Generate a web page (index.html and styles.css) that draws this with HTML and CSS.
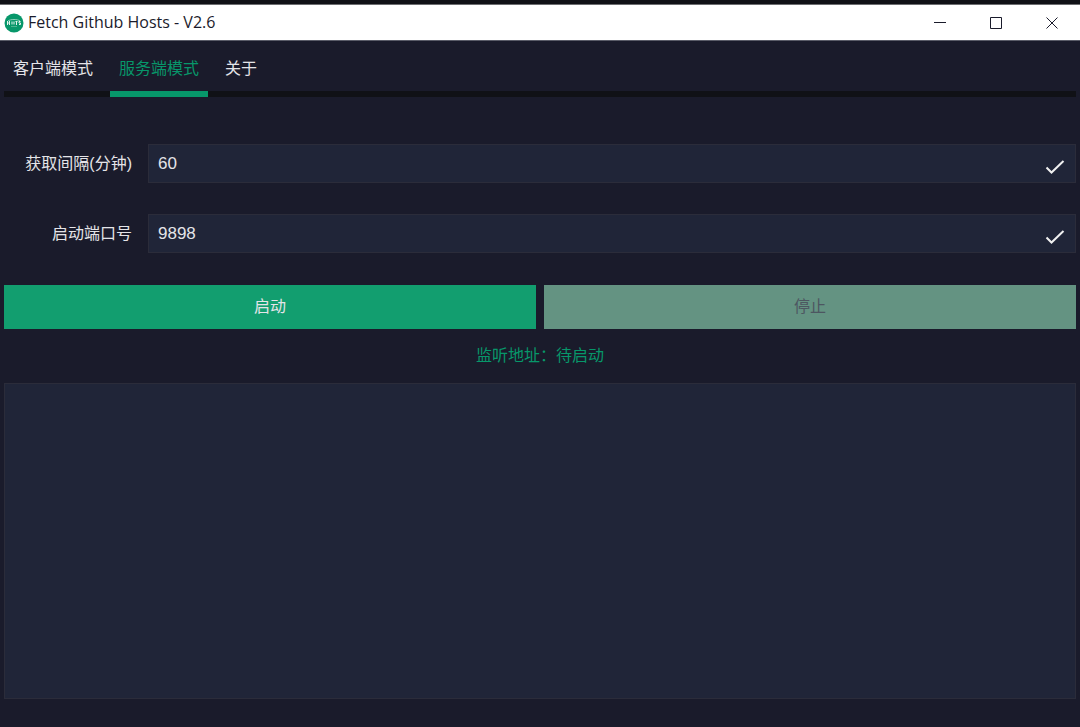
FILE: index.html
```html
<!DOCTYPE html>
<html lang="zh-CN">
<head>
    <meta charset="UTF-8">
    <meta name="viewport" content="width=device-width, initial-scale=1.0">
    <title>Fetch Github Hosts - V2.6</title>
    <link rel="stylesheet" href="styles.css">
</head>
<body>
    <header class="title-bar">
        <svg class="app-logo" viewBox="0 0 20 20" aria-hidden="true">
            <circle cx="10" cy="10" r="9.5" fill="#07976a"/>
            <path d="M4 8c2-2 10-2 12 0" fill="none" stroke="#8fd0b8" stroke-width="1"/>
            <path d="M3.5 8v4M5.5 8v4M3.5 10h2M8 8.5v3M10 8.5v3M12.5 8v4M11.5 8.5h2M16.5 8.5h-1.5v1.500h1.500v1.500h-1.500" fill="none" stroke="#e6f5ef" stroke-width="1"/>
            <path d="M7 13.500h6" stroke="#4db38f" stroke-width="1"/>
        </svg>
        <h1 class="app-title">Fetch Github Hosts - V2.6</h1>
        <div class="window-controls">
            <button type="button" class="window-btn" aria-label="最小化">
                <svg viewBox="0 0 12 12"><path d="M0 5.500h12"/></svg>
            </button>
            <button type="button" class="window-btn" aria-label="最大化">
                <svg viewBox="0 0 12 12"><path d="M.5.5h11v11H.5z"/></svg>
            </button>
            <button type="button" class="window-btn" aria-label="关闭">
                <svg viewBox="0 0 12 12"><path d="M.5.5l11 11M11.500.5l-11 11"/></svg>
            </button>
        </div>
    </header>

    <main class="content">
        <nav class="tabs">
            <button type="button" class="tab">客户端模式</button>
            <button type="button" class="tab active">服务端模式</button>
            <button type="button" class="tab">关于</button>
        </nav>

        <form class="server-form">
            <label class="field-label" for="interval">获取间隔(分钟)</label>
            <div class="field">
                <input type="text" id="interval" class="field-input" value="60">
                <svg class="field-check" viewBox="0 0 20 16" aria-hidden="true"><path d="M1.500 8.500l5 5L18.500 2"/></svg>
            </div>
            <label class="field-label" for="port">启动端口号</label>
            <div class="field">
                <input type="text" id="port" class="field-input" value="9898">
                <svg class="field-check" viewBox="0 0 20 16" aria-hidden="true"><path d="M1.500 8.500l5 5L18.500 2"/></svg>
            </div>
        </form>

        <div class="actions">
            <button type="button" class="action-btn">启动</button>
            <button type="button" class="action-btn" disabled>停止</button>
        </div>

        <p class="status">监听地址：待启动</p>

        <textarea class="log" aria-label="日志" readonly></textarea>
    </main>
</body>
</html>
```
FILE: styles.css
```css
* {
    margin: 0;
    padding: 0;
    box-sizing: border-box;
}

body {
    font-family: "Liberation Sans", "Noto Sans CJK SC", sans-serif;
    font-size: 16px;
    line-height: 24px;
    color: #e4e4e8;
    background: #1a1b2b;
    min-height: 100vh;
    display: flex;
    flex-direction: column;
    border-top: 4px solid #101116;
}

button,
input,
textarea {
    font: inherit;
    color: inherit;
    border: none;
    outline: none;
}

/* title bar */
.title-bar {
    display: flex;
    align-items: center;
    height: 37px;
    padding-left: 4px;
    background: white;
    color: #1a1b2b;
    border-top: 1px solid #6c6d70;
    border-bottom: 1px solid #5a5c68;
}

.app-logo {
    width: 20px;
    height: 20px;
}

.app-title {
    flex: 1;
    margin-left: 4px;
    font-family: "Open Sans", "Noto Sans", sans-serif;
    font-size: 16px;
    line-height: 22px;
    padding-bottom: 2px;
    font-weight: normal;
}

.window-controls {
    display: flex;
    height: 100%;
}

.window-btn {
    width: 56px;
    background: none;
    display: flex;
    align-items: center;
    justify-content: center;
}

.window-btn:hover {
    background: #e5e5e5;
}

.window-btn svg {
    width: 12px;
    height: 12px;
    fill: none;
    stroke: #1a1b2b;
    stroke-width: 1;
}

.content {
    flex: 1;
    display: flex;
    flex-direction: column;
    padding: 0 4px 28px;
}

/* tabs */
.tabs {
    display: flex;
    gap: 8px;
    height: 56px;
    border-bottom: 6px solid #101116;
}

.tab {
    height: 56px;
    padding: 6px 9px 0;
    background: none;
    border-bottom: 6px solid transparent;
    cursor: pointer;
}

.tab.active {
    color: #07976a;
    border-color: #07976a;
}

/* form */
.server-form {
    display: grid;
    grid-template-columns: 128px 1fr;
    column-gap: 16px;
    row-gap: 31px;
    align-items: center;
    margin: 47px 0 32px;
}

.field-label {
    text-align: right;
}

.field {
    display: flex;
    align-items: center;
    height: 39px;
    padding-right: 10px;
    background: #202538;
    border: 1px solid #2b2c3a;
}

.field-input {
    flex: 1;
    min-width: 0;
    height: 100%;
    padding: 0 9px;
    font-size: 17px;
    background: none;
}

.field-check {
    width: 20px;
    height: 16px;
    margin-top: 6px;
    fill: none;
    stroke: #f0f0f0;
    stroke-width: 2;
}

/* start / stop */
.actions {
    display: grid;
    grid-template-columns: 1fr 1fr;
    gap: 8px;
}

.action-btn {
    height: 44px;
    background: #129e6f;
    cursor: pointer;
}

.action-btn:disabled {
    background: #649382;
    color: #4d5661;
    cursor: default;
}

.status {
    margin: 15px 0;
    text-align: center;
    color: #07976a;
}

.log {
    flex: 1;
    min-height: 120px;
    padding: 8px;
    background: #202538;
    border: 1px solid #2b2c3a;
    resize: none;
}
```
